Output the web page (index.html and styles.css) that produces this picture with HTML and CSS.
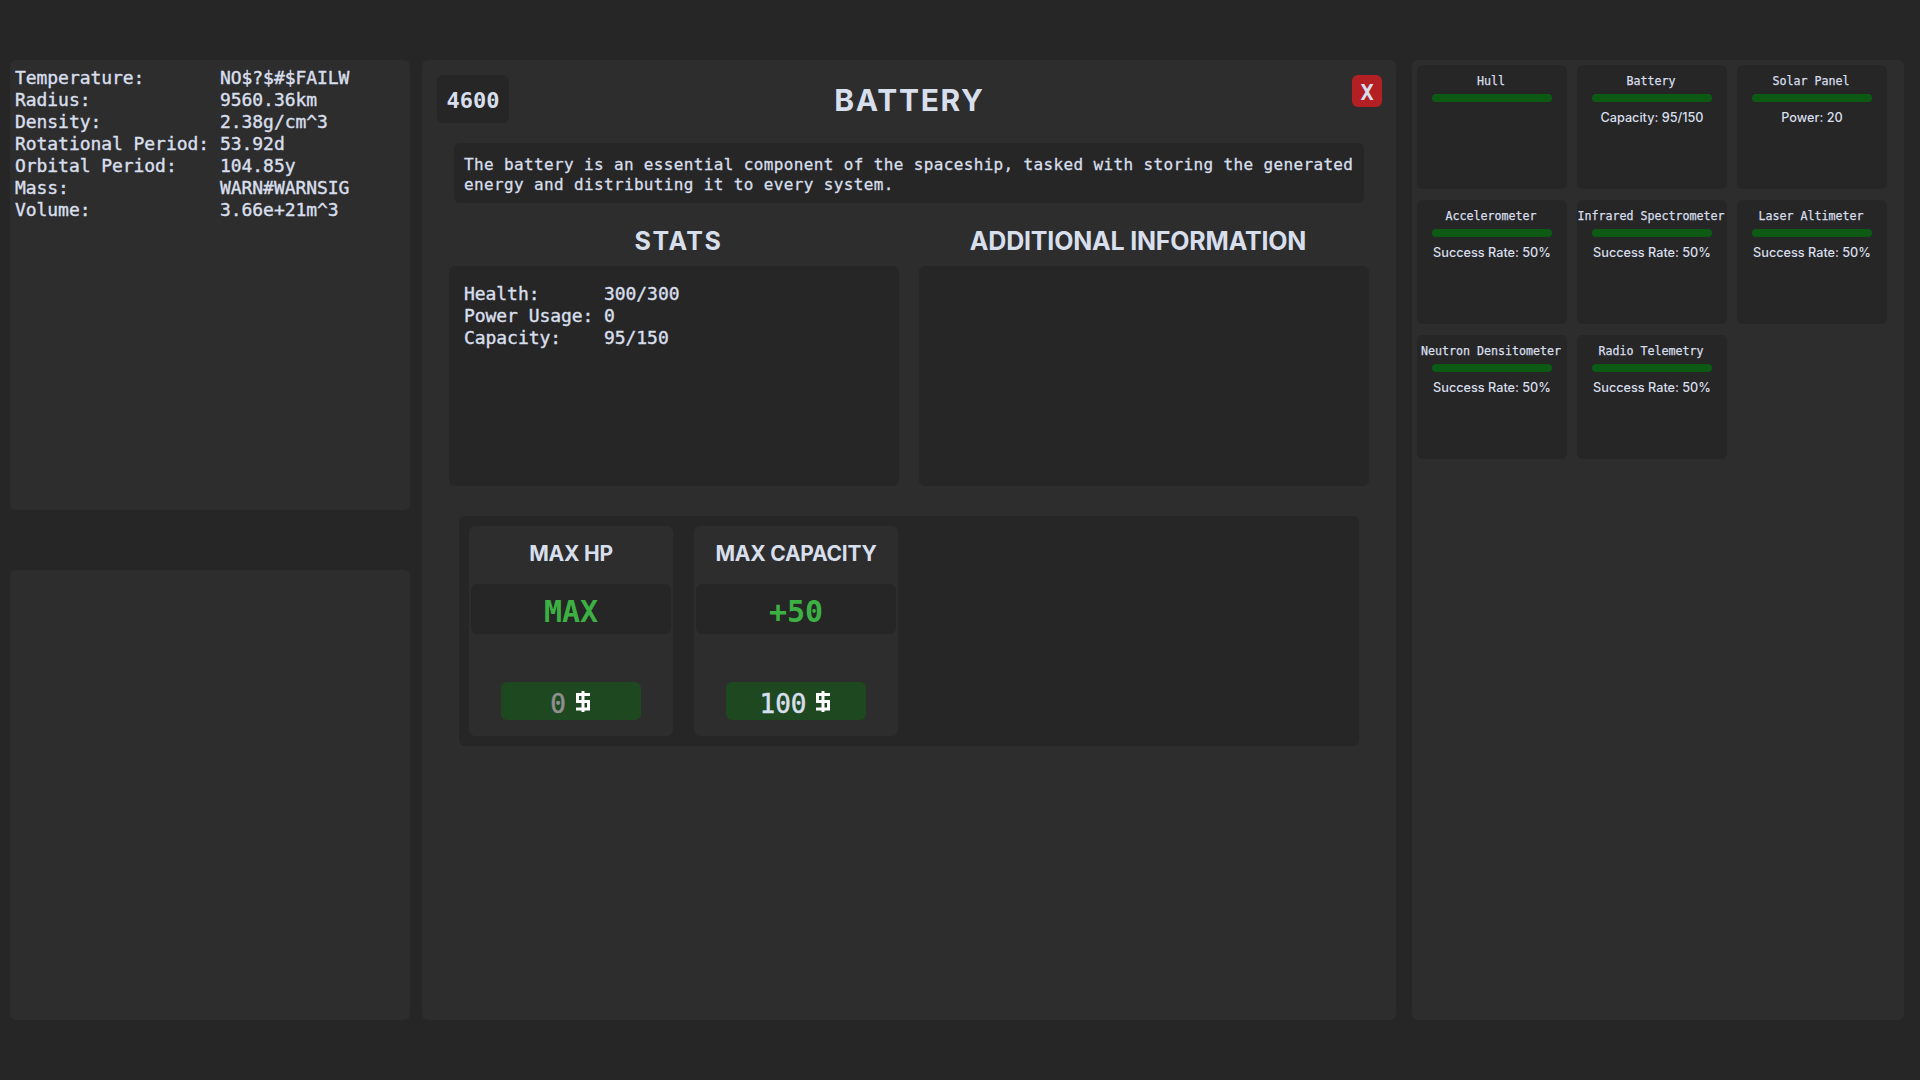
FILE: index.html
```html
<!DOCTYPE html>
<html lang="en">
<head>
<meta charset="utf-8">
<title>Battery</title>
<link rel="stylesheet" href="styles.css">
</head>
<body>
<main class="layout">
  <div class="side">
    <section class="panel readings">
      <dl class="facts planet">
        <dt>Temperature:</dt><dd>NO$?$#$FAILW</dd>
        <dt>Radius:</dt><dd>9560.36km</dd>
        <dt>Density:</dt><dd>2.38g/cm^3</dd>
        <dt>Rotational Period:</dt><dd>53.92d</dd>
        <dt>Orbital Period:</dt><dd>104.85y</dd>
        <dt>Mass:</dt><dd>WARN#WARNSIG</dd>
        <dt>Volume:</dt><dd>3.66e+21m^3</dd>
      </dl>
    </section>
    <section class="panel log"></section>
  </div>

  <section class="panel detail">
    <header class="detail-head">
      <div class="head-cell"><div class="balance">4600</div></div>
      <h1 class="title">BATTERY</h1>
      <div class="head-cell end"><button class="close">X</button></div>
    </header>
    <p class="description">The battery is an essential component of the spaceship, tasked with storing the generated energy and distributing it to every system.</p>
    <div class="columns">
      <div>
        <h2 class="subtitle stats-title">STATS</h2>
        <div class="box">
          <dl class="facts stats">
            <dt>Health:</dt><dd>300/300</dd>
            <dt>Power Usage:</dt><dd>0</dd>
            <dt>Capacity:</dt><dd>95/150</dd>
          </dl>
        </div>
      </div>
      <div>
        <h2 class="subtitle info-title">ADDITIONAL INFORMATION</h2>
        <div class="box"></div>
      </div>
    </div>
    <div class="upgrades">
      <article class="upgrade">
        <h3 class="upgrade-name">MAX HP</h3>
        <div class="gain">MAX</div>
        <button class="buy"><span class="price spent">0</span><svg class="coin" viewBox="0 0 14 21"><path d="M14 3.5H1.5v7H12.5v7.5H0M7 0v21" /></svg></button>
      </article>
      <article class="upgrade">
        <h3 class="upgrade-name">MAX CAPACITY</h3>
        <div class="gain">+50</div>
        <button class="buy"><span class="price">100</span><svg class="coin" viewBox="0 0 14 21"><path d="M14 3.5H1.5v7H12.5v7.5H0M7 0v21" /></svg></button>
      </article>
    </div>
  </section>

  <section class="panel systems">
    <article class="system"><h4>Hull</h4><div class="health"></div></article>
    <article class="system"><h4>Battery</h4><div class="health"></div><p>Capacity: 95/150</p></article>
    <article class="system"><h4>Solar Panel</h4><div class="health"></div><p>Power: 20</p></article>
    <article class="system"><h4>Accelerometer</h4><div class="health"></div><p>Success Rate: 50%</p></article>
    <article class="system"><h4>Infrared Spectrometer</h4><div class="health"></div><p>Success Rate: 50%</p></article>
    <article class="system"><h4>Laser Altimeter</h4><div class="health"></div><p>Success Rate: 50%</p></article>
    <article class="system"><h4>Neutron Densitometer</h4><div class="health"></div><p>Success Rate: 50%</p></article>
    <article class="system"><h4>Radio Telemetry</h4><div class="health"></div><p>Success Rate: 50%</p></article>
  </section>
</main>
</body>
</html>
```
FILE: styles.css
```css
* { box-sizing: border-box; margin: 0; padding: 0; }

body {
  height: 1080px;
  overflow: hidden;
  background: #262626;
  color: #d8dfec;
  font-family: "DejaVu Sans Mono", "Liberation Mono", monospace;
}

.layout {
  display: grid;
  grid-template-columns: 400px 974px 496px;
  column-gap: 12px;
  height: 1080px;
  padding: 60px 0 60px 10px;
}

.panel { background: #2d2d2d; border-radius: 6px; }

.side { display: flex; flex-direction: column; gap: 60px; }
.readings, .log { height: 450px; }
.readings { padding: 7px 5px; }

.facts {
  display: grid;
  font-size: 18px;
  line-height: 22px;
  letter-spacing: -0.06px;
  -webkit-text-stroke: 0.4px;
}
.planet { grid-template-columns: 205px 1fr; }
.stats { grid-template-columns: 140px 1fr; }

.detail { padding: 15px 14px 0 15px; }
.detail-head { display: grid; grid-template-columns: 1fr auto 1fr; height: 68px; }
.head-cell { display: flex; align-items: flex-start; }
.end { justify-content: flex-end; }
.balance {
  width: 72px;
  height: 48px;
  border-radius: 6px;
  background: #262626;
  font-size: 22px;
  font-weight: 700;
  line-height: 51px;
  text-align: center;
}
.title, .subtitle, .upgrade-name {
  font-family: Inter, sans-serif;
  font-weight: 700;
  text-align: center;
  white-space: nowrap;
}
.title { font-size: 30px; line-height: 50px; letter-spacing: 1.7px; }
.close {
  width: 30px;
  height: 32px;
  border: 0;
  border-radius: 6px;
  background: #b22024;
  color: inherit;
  font: 700 22px/36px "DejaVu Sans Mono", monospace;
}

.description {
  width: 910px;
  height: 60px;
  margin-left: 17px;
  padding: 12px 0 0 10px;
  border-radius: 6px;
  background: #262626;
  font-size: 16px;
  line-height: 20px;
  letter-spacing: 0.36px;
  -webkit-text-stroke: 0.3px;
}

.columns { display: grid; grid-template-columns: 450px 450px; gap: 20px; margin-left: 12px; }
.subtitle { height: 63px; padding-top: 23px; font-size: 25px; line-height: 30px; }
.stats-title { margin-left: 9px; letter-spacing: 1.5px; }
.info-title { margin-right: 12px; letter-spacing: -0.2px; }
.box { height: 220px; padding: 17px 15px; border-radius: 6px; background: #262626; }

.upgrades {
  display: flex;
  gap: 21px;
  width: 900px;
  height: 230px;
  margin: 30px 0 0 22px;
  padding: 10px;
  border-radius: 6px;
  background: #262626;
}
.upgrade {
  display: flex;
  flex-direction: column;
  align-items: center;
  width: 204px;
  height: 210px;
  border-radius: 6px;
  background: #2d2d2d;
}
.upgrade-name { height: 58px; font-size: 21px; line-height: 56px; letter-spacing: -0.25px; }
.gain {
  width: 200px;
  height: 50px;
  border-radius: 6px;
  background: #262626;
  color: #3cb043;
  font-size: 30px;
  font-weight: 700;
  line-height: 55px;
  text-align: center;
}
.buy {
  display: flex;
  justify-content: center;
  gap: 10px;
  width: 140px;
  height: 38px;
  margin-top: 48px;
  padding-right: 2px;
  border: 0;
  border-radius: 6px;
  background: #1e4820;
  color: #d8dfec;
  font: 26px/45px "DejaVu Sans Mono", monospace;
}
.price { -webkit-text-stroke: 0.5px; }
.spent { color: #8f9090; }
.coin { width: 14px; height: 21px; margin-top: 9px; fill: none; stroke: #fff; stroke-width: 3; }

.systems {
  display: grid;
  grid-template-columns: repeat(3, 150px);
  grid-auto-rows: 124px;
  gap: 11px 10px;
  margin-left: 4px;
  padding: 5px;
}
.system { border-radius: 6px; background: #262626; text-align: center; white-space: nowrap; }
.system h4 {
  height: 29px;
  padding-right: 2px;
  font-size: 11.65px;
  font-weight: 400;
  line-height: 32px;
  -webkit-text-stroke: 0.25px;
}
.system p { margin-top: 7px; font: 500 12.7px/17px Inter, sans-serif; }
.health { width: 120px; height: 8px; margin: 0 auto; border-radius: 4px; background: #0c5a14; }
```
